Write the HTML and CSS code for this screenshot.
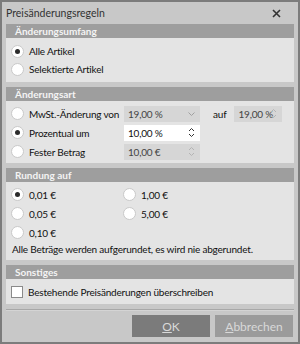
FILE: index.html
```html
<!DOCTYPE html>
<html lang="de">
<head>
<meta charset="UTF-8" />
<title>Preisänderungsregeln</title>
<link rel="stylesheet" href="styles.css">
</head>
<body>
<div class="fenster">
  <div class="titel">
    <span>Preisänderungsregeln</span>
    <svg class="schliessen" width="9" height="9" viewBox="0 0 9 9"><path d="M1 1L8 8M8 1L1 8" stroke="#333" stroke-width="1.6"/></svg>
  </div>

  <div class="inhalt">
    <section class="gruppe">
      <div class="kopf">Änderungsumfang</div>
      <div class="felder eng">
        <label class="zeile"><span class="radio an"></span>Alle Artikel</label>
        <label class="zeile"><span class="radio"></span>Selektierte Artikel</label>
      </div>
    </section>

    <section class="gruppe">
      <div class="kopf">Änderungsart</div>
      <div class="felder art">
        <div class="zeile">
          <label class="wahl"><span class="radio"></span>MwSt.-Änderung von</label>
          <div class="eingabe aus">19,00 %
            <svg class="pfeil" width="7" height="4" viewBox="0 0 7 4"><path d="M0.5 0.5L3.5 3.5L6.5 0.5" fill="none" stroke="#a0a0a0"/></svg>
          </div>
          <span class="auf">auf</span>
          <div class="eingabe aus klein">19,00 %
            <svg class="spin" width="7" height="11" viewBox="0 0 7 11"><path d="M1 4L3.5 1.5L6 4M1 7L3.5 9.5L6 7" fill="none" stroke="#b4b4b4"/></svg>
          </div>
        </div>
        <div class="zeile">
          <label class="wahl"><span class="radio an"></span>Prozentual um</label>
          <div class="eingabe">10,00 %
            <svg class="spin" width="7" height="11" viewBox="0 0 7 11"><path d="M1 4L3.5 1.5L6 4M1 7L3.5 9.5L6 7" fill="none" stroke="#333"/></svg>
          </div>
        </div>
        <div class="zeile">
          <label class="wahl"><span class="radio"></span>Fester Betrag</label>
          <div class="eingabe aus">10,00 €
            <svg class="spin" width="7" height="11" viewBox="0 0 7 11"><path d="M1 4L3.5 1.5L6 4M1 7L3.5 9.5L6 7" fill="none" stroke="#b4b4b4"/></svg>
          </div>
        </div>
      </div>
    </section>

    <section class="gruppe">
      <div class="kopf">Rundung auf</div>
      <div class="felder rundung">
        <div class="raster">
          <label class="zeile"><span class="radio an"></span>0,01 €</label>
          <label class="zeile"><span class="radio"></span>1,00 €</label>
          <label class="zeile"><span class="radio"></span>0,05 €</label>
          <label class="zeile"><span class="radio"></span>5,00 €</label>
          <label class="zeile"><span class="radio"></span>0,10 €</label>
        </div>
        <div class="hinweis">Alle Beträge werden aufgerundet, es wird nie abgerundet.</div>
      </div>
    </section>

    <section class="gruppe">
      <div class="kopf">Sonstiges</div>
      <div class="felder sonst">
        <label class="zeile"><span class="check"></span>Bestehende Preisänderungen überschreiben</label>
      </div>
    </section>
  </div>

  <div class="trenner"></div>

  <div class="knoepfe">
    <button class="ok"><u>O</u>K</button>
    <button class="abbruch"><u>A</u>bbrechen</button>
  </div>
</div>
</body>
</html>
```

FILE: styles.css
```css
body {
  margin: 0;
  font-family: Lato, "Noto Sans", sans-serif;
  font-size: 10px;
  letter-spacing: -0.2px;
  color: #111;
  white-space: nowrap;
}
.fenster {
  width: 300px;
  height: 344px;
  box-sizing: border-box;
  border: 2px solid #7c7c7c;
  background: #c8c8c8;
  display: flex;
  flex-direction: column;
}
.titel {
  height: 22px;
  display: flex;
  align-items: center;
  justify-content: space-between;
  padding: 0 17px 0 4px;
  color: #333;
  font-size: 10.5px;
  letter-spacing: 0;
}
.inhalt {
  padding: 0 4px;
  display: flex;
  flex-direction: column;
  gap: 5px;
}
.gruppe {
  background: #e4e4e4;
}
.kopf {
  height: 14px;
  line-height: 14px;
  background: #9e9e9e;
  color: #f4f4f4;
  font-weight: 700;
  letter-spacing: 0;
  padding-left: 9px;
}
.felder {
  padding: 3px 0 2px 5px;
}
.felder.eng {
  padding: 4px 0 4px 5px;
}
.felder.eng .zeile {
  height: 18px;
}
.zeile {
  height: 19px;
  display: flex;
  align-items: center;
}
.wahl {
  display: flex;
  align-items: center;
  width: 113px;
}
.radio {
  width: 11px;
  height: 11px;
  border: 1px solid #c9c9c9;
  border-radius: 50%;
  background: #fff;
  margin-right: 5px;
  display: flex;
  align-items: center;
  justify-content: center;
  flex: none;
}
.radio.an::after {
  content: "";
  width: 5px;
  height: 5px;
  border-radius: 50%;
  background: #2b2b2b;
}
.check {
  width: 10px;
  height: 10px;
  border: 1px solid #8a8a8a;
  background: #fff;
  margin-right: 5px;
}
.eingabe {
  position: relative;
  width: 72px;
  height: 16px;
  line-height: 16px;
  padding-left: 4px;
  background: #fff;
}
.eingabe.aus {
  background: #d6d6d6;
  color: #444;
}
.eingabe.klein {
  width: 44px;
}
.pfeil {
  position: absolute;
  right: 5px;
  top: 6px;
}
.spin {
  position: absolute;
  right: 5px;
  top: 2px;
}
.auf {
  margin: 0 8px 0 13px;
}
.rundung {
  padding: 3px 0 4px 5px;
}
.raster {
  display: grid;
  grid-template-columns: 112px 1fr;
}
.hinweis {
  height: 14px;
  line-height: 14px;
  padding-left: 1px;
}
.sonst {
  padding: 3px 0 3px 5px;
}
.trenner {
  margin: 5px 4px 0;
  height: 1px;
  background: #a8a8a8;
  border-bottom: 1px solid #d4d4d4;
}
.knoepfe {
  display: flex;
  justify-content: flex-end;
  gap: 5px;
  padding: 4px 5px 0;
}
button {
  width: 78px;
  height: 22px;
  border: none;
  font-family: inherit;
  font-size: 12px;
  color: #d9d9d9;
}
.ok {
  background: #7b7b7b;
}
.abbruch {
  background: #9b9b9b;
}
```
